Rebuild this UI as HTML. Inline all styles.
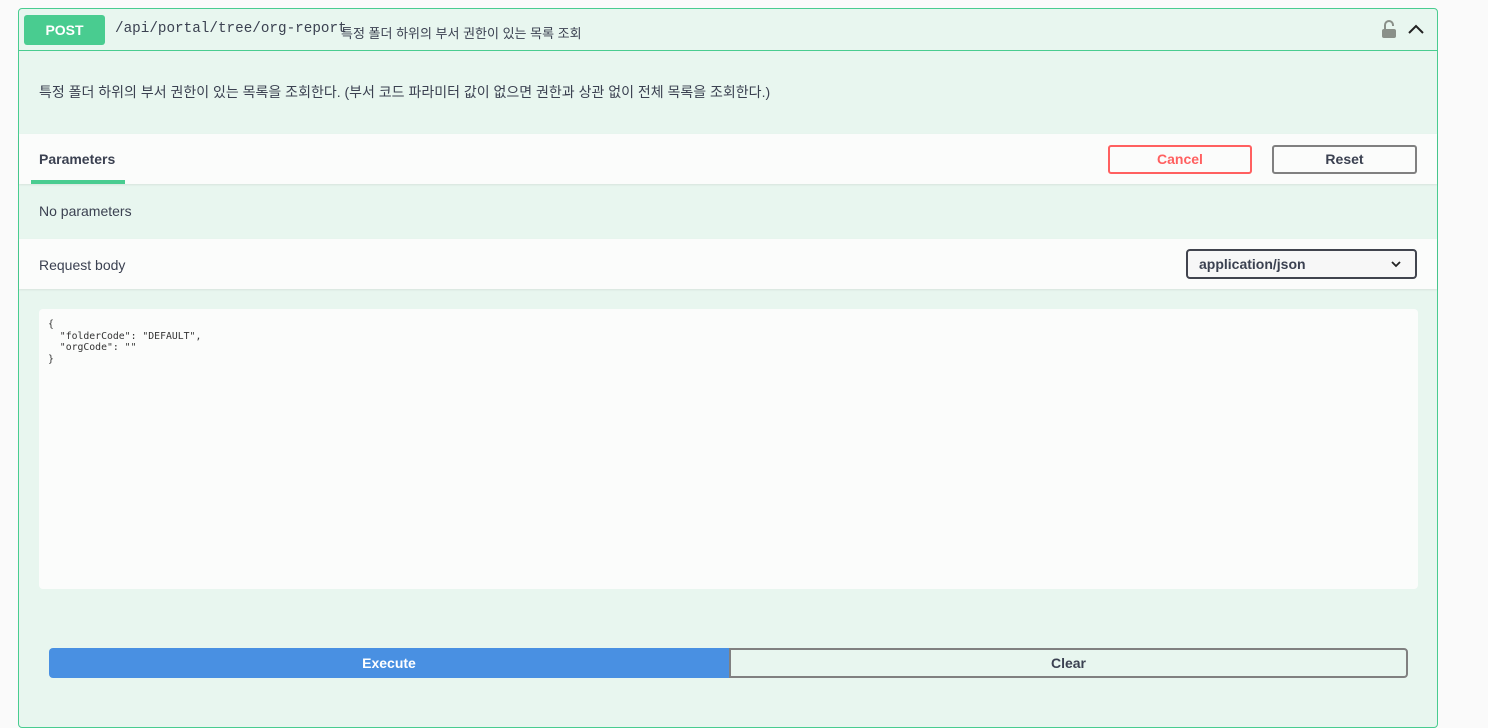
<!DOCTYPE html>
<html><head><meta charset="utf-8"><style>
*{box-sizing:border-box;margin:0;padding:0}
body{width:1488px;height:707px;background:#fafafa;font-family:"Liberation Sans","Noto Sans CJK KR",sans-serif;color:#3b4151;overflow:hidden;position:relative}
.box{position:absolute;left:18px;top:8px;width:1420px;height:720px;border:1px solid #49cc90;border-radius:4px;background:#e8f6ef}
.hdr{position:absolute;left:0;top:0;width:1418px;height:42px;border-bottom:1px solid #49cc90}
.post{position:absolute;left:5px;top:6px;width:81px;height:30px;background:#49cc90;border-radius:3px;color:#fff;font-weight:bold;font-size:14px;text-align:center;line-height:30px}
.path{position:absolute;left:96px;top:12px;font-family:"Liberation Mono","DejaVu Sans Mono",monospace;font-size:14.3px;color:#3b4151}
.sum{position:absolute;left:322px;top:14px;font-size:13px;color:#3b4151}
.desc{position:absolute;left:20px;top:73px;font-size:14px}
.white{position:absolute;left:0;width:1418px;background:#fbfcfb;box-shadow:0 1px 2px rgba(0,0,0,.08)}
.btn{position:absolute;height:29px;border:2px solid #808080;border-radius:3px;background:transparent;font-weight:bold;font-size:14px;text-align:center;line-height:25px}
.mono{font-family:"DejaVu Sans Mono","Liberation Mono",monospace;font-size:9.8px;line-height:11.5px;white-space:pre;color:#333}
</style></head><body>
<div class="box">
 <div class="hdr">
  <div class="post">POST</div>
  <div class="path">/api/portal/tree/org-report</div>
  <div class="sum">특정 폴더 하위의 부서 권한이 있는 목록 조회</div>
  <svg style="position:absolute;left:1362px;top:10px" width="16" height="20" viewBox="0 0 16 20"><path d="M4 10V6a4 4 0 0 1 8 0v1" fill="none" stroke="#8a9089" stroke-width="2"/><rect x="1" y="10" width="14" height="9" rx="2" fill="#8a9089"/></svg>
  <svg style="position:absolute;left:1388px;top:14px" width="18" height="12" viewBox="0 0 18 12"><path d="M2 10L9 3L16 10" fill="none" stroke="#222" stroke-width="2"/></svg>
 </div>
 <div class="desc">특정 폴더 하위의 부서 권한이 있는 목록을 조회한다. (부서 코드 파라미터 값이 없으면 권한과 상관 없이 전체 목록을 조회한다.)</div>
 <div class="white" style="top:125px;height:50px">
  <div style="position:absolute;left:20px;top:17px;font-weight:bold;font-size:14px">Parameters</div>
  <div style="position:absolute;left:12px;top:46px;width:94px;height:4px;background:#49cc90"></div>
  <div class="btn" style="left:1089px;top:11px;width:144px;border-color:#ff6060;color:#ff6060">Cancel</div>
  <div class="btn" style="left:1253px;top:11px;width:145px">Reset</div>
 </div>
 <div style="position:absolute;left:20px;top:194px;font-size:14px">No parameters</div>
 <div class="white" style="top:230px;height:50px">
  <div style="position:absolute;left:20px;top:18px;font-size:14px">Request body</div>
  <div style="position:absolute;left:1167px;top:10px;width:231px;height:30px;border:2px solid #41444e;border-radius:4px;background:#f7f7f7;font-weight:bold;font-size:14px;padding:5px 11px">application/json
   <svg style="position:absolute;right:14px;top:10px" width="10" height="7" viewBox="0 0 10 7"><path d="M1 1L5 5L9 1" fill="none" stroke="#222" stroke-width="1.8"/></svg></div>
 </div>
 <div style="position:absolute;left:20px;top:300px;width:1379px;height:280px;background:#fbfcfb;border-radius:4px;padding:10px 9px" class="mono">{
  "folderCode": "DEFAULT",
  "orgCode": ""
}</div>
 <div style="position:absolute;left:30px;top:639px;width:680px;height:30px;background:#4990e2;border-radius:4px 0 0 4px;color:#fff;font-weight:bold;font-size:14px;text-align:center;line-height:30px">Execute</div>
 <div class="btn" style="left:710px;top:639px;width:679px;height:30px;border-radius:0 4px 4px 0;line-height:26px">Clear</div>
</div>
</body></html>
